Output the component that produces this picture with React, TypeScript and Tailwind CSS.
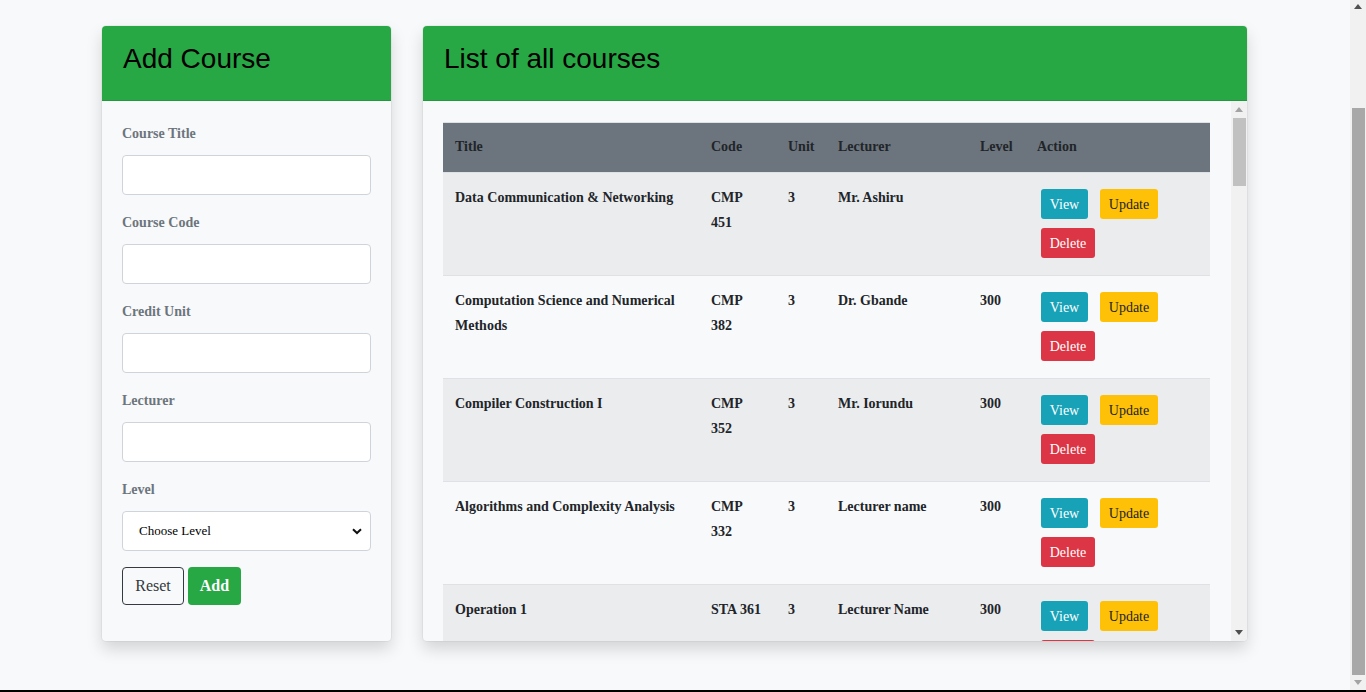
import React from "react";

const serif = { fontFamily: '"Liberation Serif", "Times New Roman", serif' };
const sans = { fontFamily: '"Liberation Sans", Arial, sans-serif' };

type Course = { title: string; code: string; unit: string; lecturer: string; level: string };

const courses: Course[] = [
  { title: "Data Communication & Networking", code: "CMP 451", unit: "3", lecturer: "Mr. Ashiru", level: "" },
  { title: "Computation Science and Numerical Methods", code: "CMP 382", unit: "3", lecturer: "Dr. Gbande", level: "300" },
  { title: "Compiler Construction I", code: "CMP 352", unit: "3", lecturer: "Mr. Iorundu", level: "300" },
  { title: "Algorithms and Complexity Analysis", code: "CMP 332", unit: "3", lecturer: "Lecturer name", level: "300" },
  { title: "Operation 1", code: "STA 361", unit: "3", lecturer: "Lecturer Name", level: "300" },
];

function Field({ label }: { label: string }) {
  return (
    <div className="flex flex-col">
      <label className="text-[14px] leading-[24px] font-bold text-[#6c757d]">{label}</label>
      <input className="mt-[9px] mb-4 h-10 w-full rounded-[4px] border border-[#ced4da] bg-white outline-none" />
    </div>
  );
}

function UpArrow({ color }: { color: string }) {
  return (
    <svg width="8" height="5" viewBox="0 0 8 5">
      <polygon points="0,5 8,5 4,0" fill={color} />
    </svg>
  );
}
function DownArrow({ color }: { color: string }) {
  return (
    <svg width="8" height="5" viewBox="0 0 8 5">
      <polygon points="0,0 8,0 4,5" fill={color} />
    </svg>
  );
}

export default function App() {
  return (
    <div className="flex h-[692px] w-[1366px] flex-col overflow-hidden bg-[#f8f9fa]" style={serif}>
      <div className="flex min-h-0 flex-1">
        <main className="flex flex-1 items-start gap-8 pl-[102px] pt-[26px]">
          {/* Left card */}
          <section className="flex h-[615px] w-[289px] flex-col overflow-hidden rounded-[4px] bg-[#f8f9fa] shadow-[0_8px_16px_rgba(0,0,0,0.15),0_0_0_1px_rgba(0,0,0,0.04)]">
            <div className="flex h-[75px] shrink-0 items-center bg-[#28a745] pb-[8px] pl-[21px] border-b border-[#23963e]">
              <h1 className="text-[28px] leading-none text-black" style={sans}>
                Add Course
              </h1>
            </div>
            <div className="flex flex-col px-5 pt-[21px]">
              <Field label="Course Title" />
              <Field label="Course Code" />
              <Field label="Credit Unit" />
              <Field label="Lecturer" />
              <div className="flex flex-col">
                <label className="text-[14px] leading-[24px] font-bold text-[#6c757d]">Level</label>
                <div className="relative mt-[9px] mb-4 flex h-10 w-full items-center rounded-[4px] border border-[#ced4da] bg-white pl-4 text-[13px] text-black">
                  <span>Choose Level</span>
                  <svg className="absolute right-[8px] top-[16px]" width="10" height="7" viewBox="0 0 10 7">
                    <path d="M1 1.2 L5 5 L9 1.2" stroke="#111" strokeWidth="2" fill="none" />
                  </svg>
                </div>
              </div>
              <div className="flex gap-1">
                <button className="h-[38px] w-[62px] rounded-[4px] border border-[#343a40] text-[16px] text-[#343a40]">
                  Reset
                </button>
                <button className="h-[38px] w-[53px] rounded-[4px] bg-[#28a745] text-[16px] font-bold text-white">
                  Add
                </button>
              </div>
            </div>
          </section>

          {/* Right card */}
          <section className="flex h-[615px] w-[824px] flex-col overflow-hidden rounded-[4px] bg-[#f8f9fa] shadow-[0_8px_16px_rgba(0,0,0,0.15),0_0_0_1px_rgba(0,0,0,0.04)]">
            <div className="flex h-[75px] shrink-0 items-center bg-[#28a745] pb-[8px] pl-[21px] border-b border-[#23963e]">
              <h1 className="text-[28px] leading-none text-black" style={sans}>
                List of all courses
              </h1>
            </div>
            <div className="flex min-h-0 flex-1">
              <div className="min-w-0 flex-1 overflow-hidden pl-5 pr-[21px] pt-[21px]">
                <table className="w-[767px] table-fixed border-collapse text-[14px] font-bold text-[#212529]">
                  <colgroup>
                    <col className="w-[256px]" />
                    <col className="w-[77px]" />
                    <col className="w-[50px]" />
                    <col className="w-[142px]" />
                    <col className="w-[57px]" />
                    <col className="w-[185px]" />
                  </colgroup>
                  <thead>
                    <tr className="h-[50px] bg-[#6c757d] border-t border-[#dee2e6]">
                      {["Title", "Code", "Unit", "Lecturer", "Level", "Action"].map((h) => (
                        <th key={h} className="px-3 pb-[2px] text-left align-middle leading-[25px] font-bold text-[#212529]">
                          {h}
                        </th>
                      ))}
                    </tr>
                  </thead>
                  <tbody>
                    {courses.map((c, i) => (
                      <tr
                        key={c.title}
                        className={`h-[103px] border-t border-[#dee2e6] ${i % 2 === 0 ? "bg-[#ebecee]" : "bg-[#f8f9fa]"}`}
                      >
                        <td className="px-3 pt-3 align-top leading-[25px]">{c.title}</td>
                        <td className="px-3 pt-3 align-top leading-[25px]">{c.code}</td>
                        <td className="px-3 pt-3 align-top leading-[25px]">{c.unit}</td>
                        <td className="px-3 pt-3 align-top leading-[25px]">{c.lecturer}</td>
                        <td className="px-3 pt-3 align-top leading-[25px]">{c.level}</td>
                        <td className="pl-4 pr-3 pt-[16px] pb-[16px] align-top font-normal">
                          <div className="flex w-[140px] flex-wrap gap-x-3 gap-y-[9px]">
                            <button className="h-[30px] w-[47px] rounded-[3px] bg-[#17a2b8] text-[14px] text-white">
                              View
                            </button>
                            <button className="h-[30px] w-[58px] rounded-[3px] bg-[#ffc107] text-[14px] text-[#212529]">
                              Update
                            </button>
                            <button className="h-[30px] w-[54px] rounded-[3px] bg-[#dc3545] text-[14px] text-white">
                              Delete
                            </button>
                          </div>
                        </td>
                      </tr>
                    ))}
                  </tbody>
                </table>
              </div>
              {/* inner scrollbar */}
              <div className="flex w-4 shrink-0 flex-col items-center bg-[#f1f1f1]">
                <div className="flex h-[17px] items-center justify-center">
                  <UpArrow color="#a3a3a3" />
                </div>
                <div className="h-[68px] w-[13px] bg-[#c1c1c1]" />
                <div className="flex-1" />
                <div className="flex h-[17px] items-center justify-center">
                  <DownArrow color="#505050" />
                </div>
              </div>
            </div>
          </section>
        </main>
        {/* page scrollbar */}
        <div className="flex w-4 shrink-0 flex-col items-center bg-[#f1f1f1]">
          <div className="flex h-[12px] items-center justify-center pt-[1px]">
            <UpArrow color="#505050" />
          </div>
          <div className="h-[96px]" />
          <div className="h-[567px] w-[13px] bg-[#a8a8a8]" />
          <div className="flex flex-1 items-center justify-center">
            <DownArrow color="#a3a3a3" />
          </div>
        </div>
      </div>
      <div className="h-[2px] shrink-0 bg-black" />
    </div>
  );
}
